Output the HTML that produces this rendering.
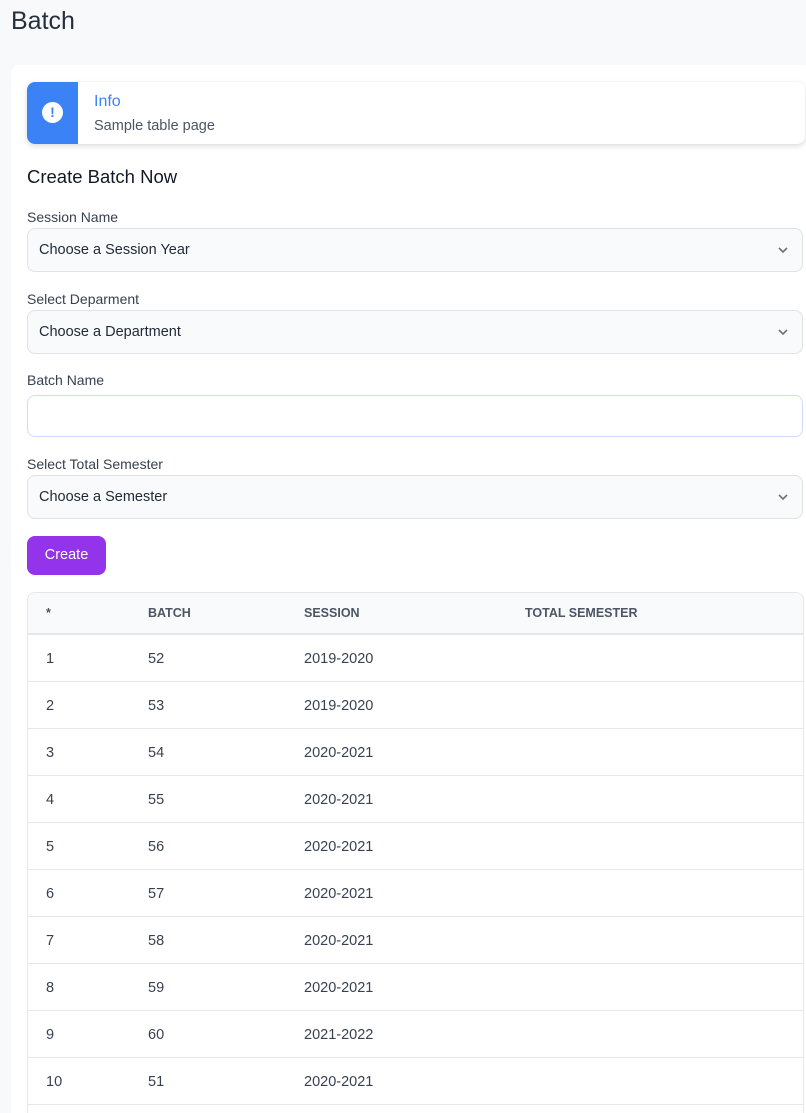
<!DOCTYPE html>
<html style="height:1113px;overflow:hidden"><head><meta charset="utf-8"><style>
*{box-sizing:border-box;margin:0;padding:0}
body{width:806px;height:1113px;background:#f8f9fb;font-family:"Liberation Sans",sans-serif;color:#1f2937;overflow:hidden;position:relative}
.abs{position:absolute}
h1{position:absolute;left:11px;top:7px;font-size:25px;font-weight:400;color:#252f3f}
.card{position:absolute;left:11px;top:65px;width:800px;height:1060px;background:#fff;border-radius:8px}
.info{position:absolute;left:27px;top:82px;width:778px;height:62px;background:#fff;border-radius:8px;box-shadow:0 2px 6px rgba(0,0,0,.15);overflow:hidden}
.info .ic{position:absolute;left:0;top:0;width:51px;height:62px;background:#3b82f6}
.info .ic div{position:absolute;left:15px;top:20px;width:21px;height:21px;border-radius:50%;background:#fff;color:#3b82f6;font-weight:700;font-size:14px;text-align:center;line-height:21px}
.lbl{position:absolute;left:27px;font-size:14px;color:#374151}
.sel{position:absolute;left:27px;width:776px;height:44px;border:1px solid #dfe2e6;border-radius:8px;background:#f9fafb;font-size:14.5px;color:#1f2937;padding:13px 11px}
.sel svg{position:absolute;right:13px;top:17px}
.btn{position:absolute;left:27px;top:536px;width:79px;height:39px;background:#9333ea;border-radius:8px;color:#fff;font-size:14.5px;text-align:center;line-height:39px}
.tbl{position:absolute;left:27px;top:592px;width:777px;height:540px;border:1px solid #e5e7eb;border-radius:8px;overflow:hidden;background:#fff}
.row{position:absolute;left:0;width:777px;height:47px;border-bottom:1px solid #e5e7eb;font-size:14.5px;color:#374151}
.row span{position:absolute;top:16px}
.hd{background:#f9fafb;height:42px;border-bottom:2px solid #e5e7eb;font-size:12.5px;font-weight:700;color:#4b5563}
.hd span{top:13px}
</style></head><body>
<h1>Batch</h1>
<div class="card"></div>
<div class="info"><div class="ic"><div>!</div></div>
<div class="abs" style="left:67px;top:11px;font-size:16px;color:#3b82f6">Info</div>
<div class="abs" style="left:67px;top:36px;font-size:14.5px;color:#4b5563">Sample table page</div></div>
<div class="abs" style="left:27px;top:166px;font-size:18.5px;color:#111827">Create Batch Now</div>
<div class="lbl" style="top:209px">Session Name</div>
<div class="sel" style="top:228px">Choose a Session Year<svg width="12" height="8" viewBox="0 0 12 8"><path d="M2 2l4 4 4-4" stroke="#6b7280" stroke-width="1.6" fill="none"/></svg></div>
<div class="lbl" style="top:291px">Select Deparment</div>
<div class="sel" style="top:310px">Choose a Department<svg width="12" height="8" viewBox="0 0 12 8"><path d="M2 2l4 4 4-4" stroke="#6b7280" stroke-width="1.6" fill="none"/></svg></div>
<div class="lbl" style="top:372px">Batch Name</div>
<div class="sel" style="top:395px;height:42px;background:#fff;border-color:#cfdcf8"></div>
<div class="lbl" style="top:456px">Select Total Semester</div>
<div class="sel" style="top:475px">Choose a Semester<svg width="12" height="8" viewBox="0 0 12 8"><path d="M2 2l4 4 4-4" stroke="#6b7280" stroke-width="1.6" fill="none"/></svg></div>
<div class="btn">Create</div>
<div class="tbl">
<div class="row hd" style="top:0"><span style="left:18px">*</span><span style="left:120px">BATCH</span><span style="left:276px">SESSION</span><span style="left:497px">TOTAL SEMESTER</span></div>
<div class="row" style="top:42px"><span style="left:18px">1</span><span style="left:120px">52</span><span style="left:276px">2019-2020</span></div>
<div class="row" style="top:89px"><span style="left:18px">2</span><span style="left:120px">53</span><span style="left:276px">2019-2020</span></div>
<div class="row" style="top:136px"><span style="left:18px">3</span><span style="left:120px">54</span><span style="left:276px">2020-2021</span></div>
<div class="row" style="top:183px"><span style="left:18px">4</span><span style="left:120px">55</span><span style="left:276px">2020-2021</span></div>
<div class="row" style="top:230px"><span style="left:18px">5</span><span style="left:120px">56</span><span style="left:276px">2020-2021</span></div>
<div class="row" style="top:277px"><span style="left:18px">6</span><span style="left:120px">57</span><span style="left:276px">2020-2021</span></div>
<div class="row" style="top:324px"><span style="left:18px">7</span><span style="left:120px">58</span><span style="left:276px">2020-2021</span></div>
<div class="row" style="top:371px"><span style="left:18px">8</span><span style="left:120px">59</span><span style="left:276px">2020-2021</span></div>
<div class="row" style="top:418px"><span style="left:18px">9</span><span style="left:120px">60</span><span style="left:276px">2021-2022</span></div>
<div class="row" style="top:465px"><span style="left:18px">10</span><span style="left:120px">51</span><span style="left:276px">2020-2021</span></div>
</div>
</body></html>
